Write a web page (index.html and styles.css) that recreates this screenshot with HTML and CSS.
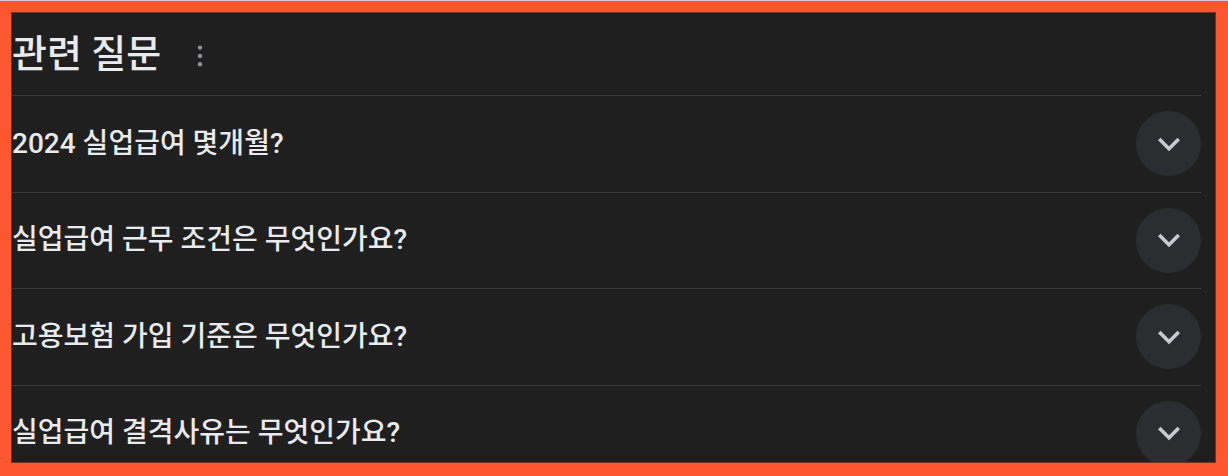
FILE: index.html
```html
<!DOCTYPE html>
<html lang="ko">
<head>
<meta charset="utf-8">
<title>관련 질문</title>
<link rel="stylesheet" href="styles.css">
</head>
<body>
<div class="frame">
  <section class="panel">
    <div class="content">
      <header class="header">
        <h2 class="title">관련 질문</h2>
        <span class="more" aria-label="더보기">
          <svg width="8" height="26" viewBox="0 0 8 26"><circle cx="4" cy="4.6" r="2.2"/><circle cx="4" cy="12.9" r="2.2"/><circle cx="4" cy="21.2" r="2.2"/></svg>
        </span>
      </header>
      <div class="row">
        <span class="q">2024 실업급여 몇개월?</span>
        <span class="toggle"><svg width="44" height="44" viewBox="0 0 24 24"><path d="M16.59 8.59L12 13.17 7.41 8.59 6 10l6 6 6-6z"/></svg></span>
      </div>
      <div class="row">
        <span class="q">실업급여 근무 조건은 무엇인가요?</span>
        <span class="toggle"><svg width="44" height="44" viewBox="0 0 24 24"><path d="M16.59 8.59L12 13.17 7.41 8.59 6 10l6 6 6-6z"/></svg></span>
      </div>
      <div class="row">
        <span class="q">고용보험 가입 기준은 무엇인가요?</span>
        <span class="toggle"><svg width="44" height="44" viewBox="0 0 24 24"><path d="M16.59 8.59L12 13.17 7.41 8.59 6 10l6 6 6-6z"/></svg></span>
      </div>
      <div class="row">
        <span class="q">실업급여 결격사유는 무엇인가요?</span>
        <span class="toggle"><svg width="44" height="44" viewBox="0 0 24 24"><path d="M16.59 8.59L12 13.17 7.41 8.59 6 10l6 6 6-6z"/></svg></span>
      </div>
    </div>
  </section>
</div>
</body>
</html>
```

FILE: styles.css
```css
html, body {
  margin: 0;
  padding: 0;
  background: #fe5631;
}

.frame {
  border-top: 1px solid #dcc9c3;
  padding: 11px 12px 13px 11px;
  height: 476px;
  box-sizing: border-box;
}

.panel {
  height: 451px;
  box-sizing: border-box;
  border: 1px solid #6b3526;
  background: #1f1f1f;
  overflow: hidden;
  font-family: Roboto, "Noto Sans CJK KR", sans-serif;
  color: #e8eaed;
}

.content {
  padding-right: 14px;
}

.header {
  height: 82px;
  display: flex;
  align-items: center;
  gap: 35px;
}

.title {
  margin: 0;
  font-size: 38px;
  font-weight: 500;
  line-height: 44px;
  color: #e8eaed;
}

.more {
  display: flex;
  margin-top: 4px;
}

.more svg {
  fill: #8e9196;
}

.row {
  height: 95.5px;
  border-top: 1px solid #3a3b3d;
  display: flex;
  align-items: center;
  justify-content: space-between;
}

.q {
  font-size: 28px;
  font-weight: 500;
  line-height: 34px;
}

.toggle {
  width: 65px;
  height: 65px;
  border-radius: 50%;
  background: #2c2d30;
  display: flex;
  align-items: center;
  justify-content: center;
}

.toggle svg {
  fill: #c6c9ce;
}
```
